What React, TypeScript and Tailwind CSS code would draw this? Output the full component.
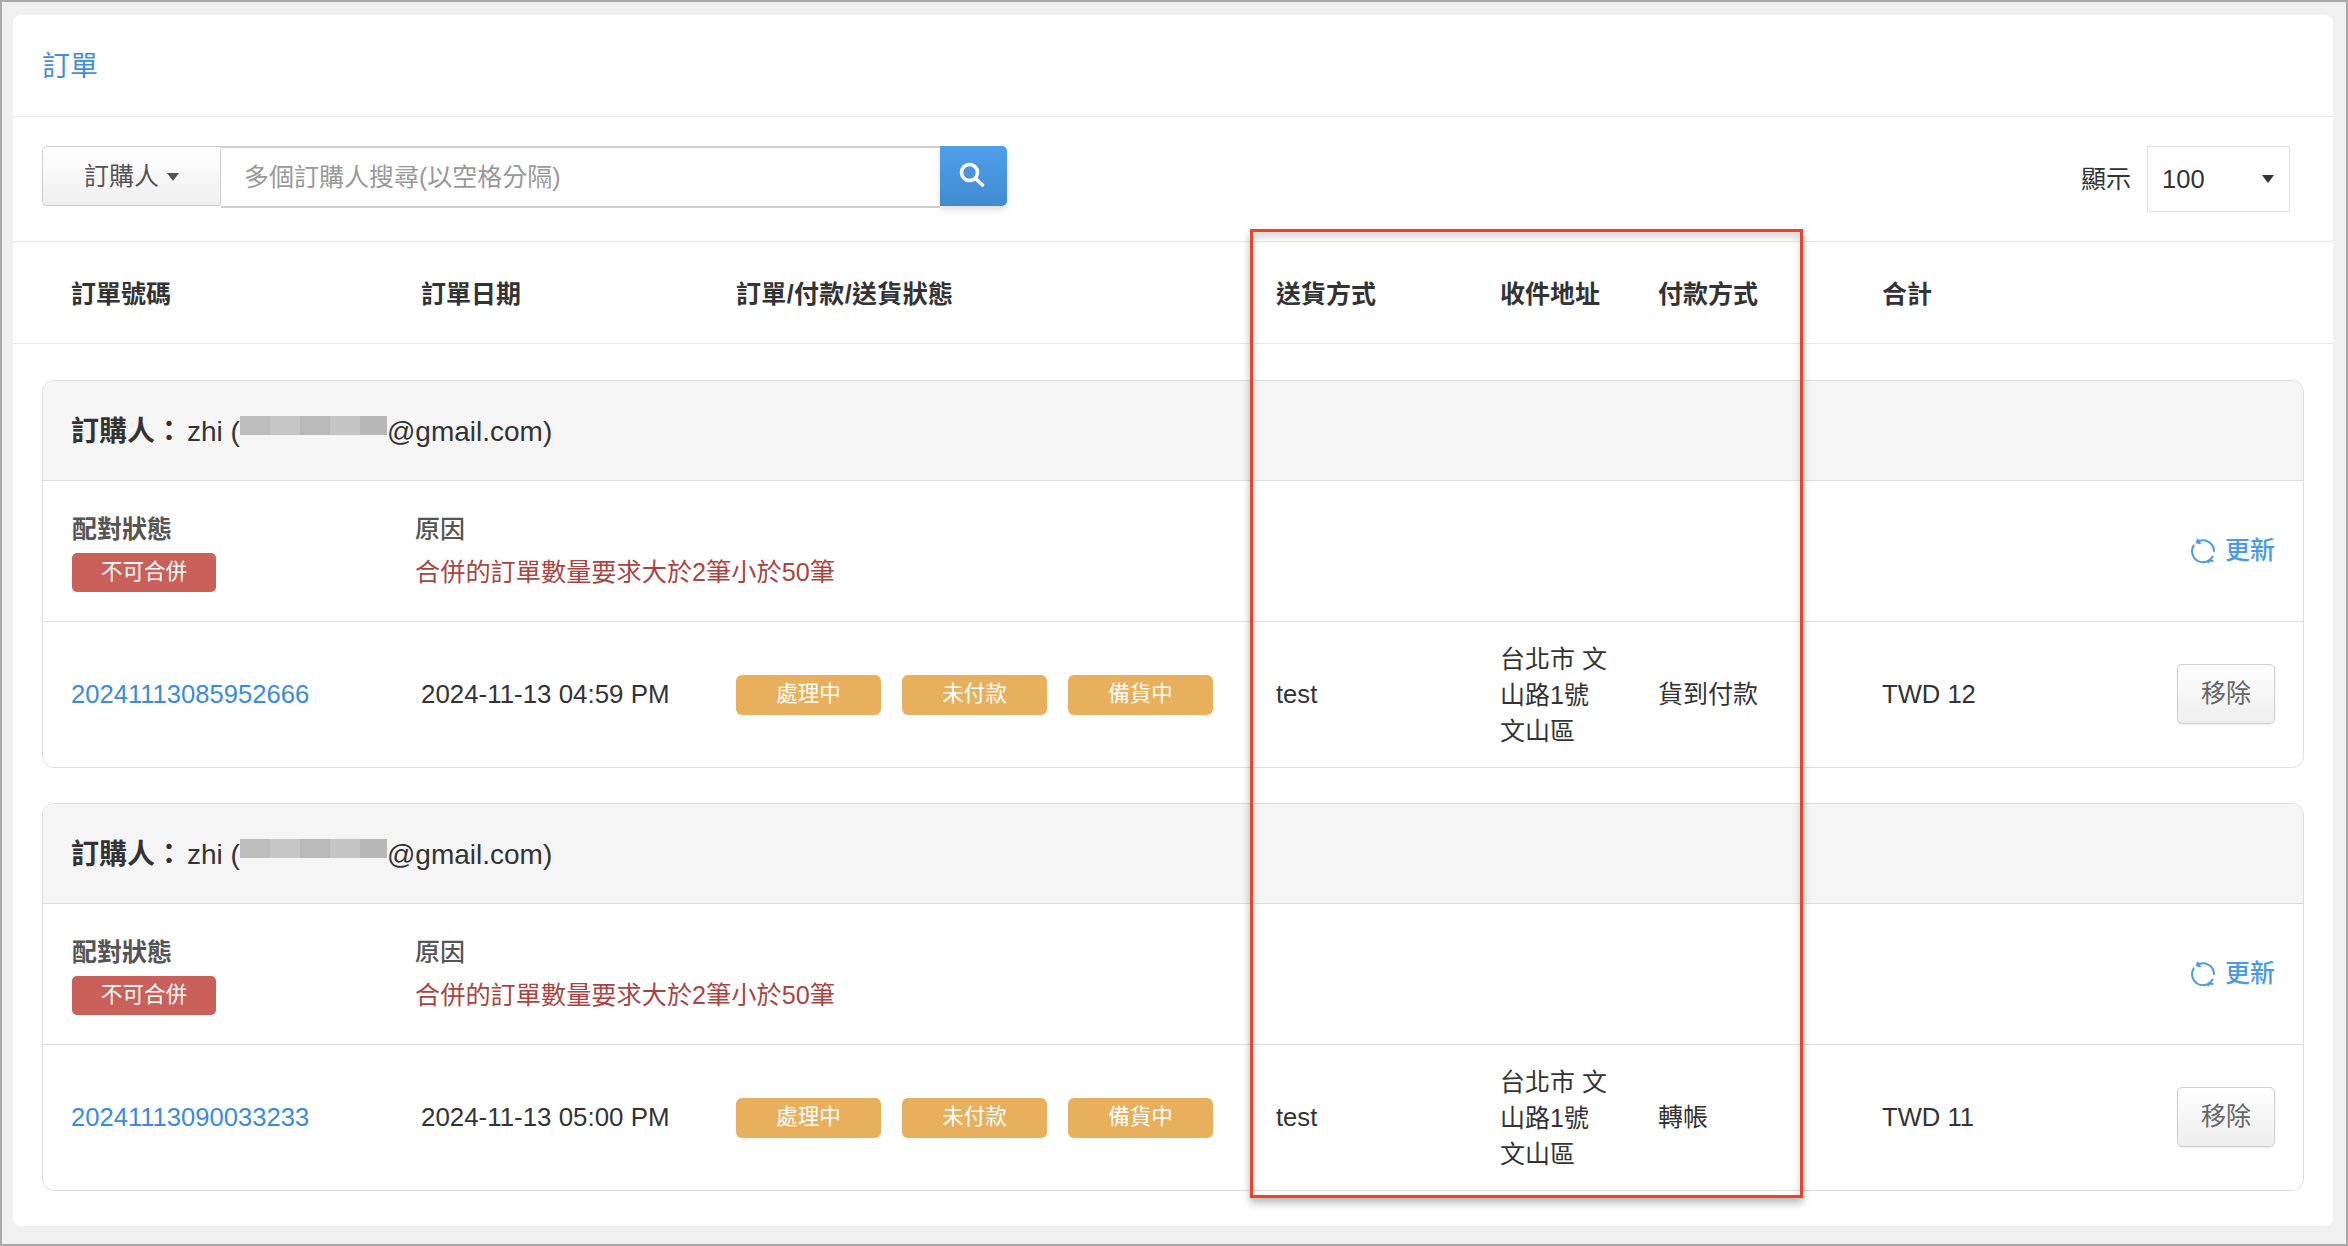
import React from "react";

const cols = "grid grid-cols-[350px_315px_540px_224px_158px_224px_1fr]";

function Caret({ className }: { className: string }) {
  return <span className={"inline-block h-0 w-0 border-x-[6px] border-t-[8px] border-x-transparent " + className} />;
}

function SearchIcon() {
  return (
    <svg width="26" height="26" viewBox="0 0 26 26" fill="none" stroke="white" strokeWidth="3.6" strokeLinecap="round" className="-translate-x-[2px] -translate-y-[1px]">
      <circle cx="10.5" cy="10.5" r="8" />
      <path d="M16.5 16.5L23.5 23" />
    </svg>
  );
}

function RefreshIcon() {
  return (
    <svg width="26" height="26" viewBox="0 0 26 26" fill="none" stroke="#4a9ae6" strokeWidth="2" strokeLinecap="round" strokeLinejoin="round">
      <path d="M7 4.2A11 11 0 0 1 24 13" />
      <path d="M22.6 18.6A11 11 0 0 1 2 13A11 11 0 0 1 3.6 7.4" />
      <path d="M7.8 1.4L7 4.4L10 5.2" />
      <path d="M18.2 24.4L19.2 22L22.6 23" />
    </svg>
  );
}

function Status({ children }: { children: React.ReactNode }) {
  return (
    <span className="flex h-10 w-[145px] items-center justify-center rounded-[6px] bg-[#e8b05c] text-[21.5px] text-white">
      {children}
    </span>
  );
}

function Redaction() {
  return (
    <span className="inline-flex h-[19px] w-[147px] -translate-y-[6px] align-middle">
      <span className="w-[30px] bg-[#bdbdbd]" />
      <span className="w-[30px] bg-[#c6c6c6]" />
      <span className="w-[30px] bg-[#b9b9b9]" />
      <span className="w-[30px] bg-[#c5c5c5]" />
      <span className="w-[27px] bg-[#b8b8b8]" />
    </span>
  );
}

function OrderPanel({ order, date, pay, total }: { order: string; date: string; pay: string; total: string }) {
  return (
    <section className="overflow-hidden rounded-[12px] border border-[#dedede]">
      <div className="flex h-[100px] items-center border-b border-[#dedede] bg-[#f5f5f5] pl-[28px] pt-[2px] text-[28px]">
        <b className="mr-[4px]">訂購人：</b>
        <span className="whitespace-pre">zhi (</span>
        <Redaction />
        <span>@gmail.com)</span>
      </div>
      <div className="flex h-[141px] items-center border-b border-[#dedede] pl-[29px] pr-[28px]">
        <div className="w-[343px]">
          <div className="font-bold leading-[36px] text-[#555]">配對狀態</div>
          <div className="mt-[6px] flex h-[39px] w-[144px] items-center justify-center rounded-[5px] bg-[#c9605a] text-[21.5px] text-white">
            不可合併
          </div>
        </div>
        <div className="flex-1">
          <div className="font-medium leading-[36px] text-[#555]">原因</div>
          <div className="mt-[6px] leading-[39px] text-[25.2px] text-[#a94442]">合併的訂單數量要求大於2筆小於50筆</div>
        </div>
        <a className="flex items-center gap-[9px] font-medium text-[#4a9ae6]">
          <RefreshIcon />
          更新
        </a>
      </div>
      <div className={cols + " h-[145px] items-center pl-[28px] pr-[28px]"}>
        <a className="text-[25.6px] text-[#3a8bdc]">{order}</a>
        <div className="text-[25.9px]">{date}</div>
        <div className="flex gap-[21px]">
          <Status>處理中</Status>
          <Status>未付款</Status>
          <Status>備貨中</Status>
        </div>
        <div className="text-[25.6px]">test</div>
        <div className="w-[112px] leading-[36px]">台北市 文山路1號 文山區</div>
        <div>{pay}</div>
        <div className="flex items-center justify-between">
          <span className="text-[25.6px]">{total}</span>
          <button className="mb-[2px] h-[60px] w-[98px] rounded-[5px] border border-[#cfcfcf] bg-gradient-to-b from-white to-[#eeeeee] text-[#666] shadow-[0_1px_2px_rgba(0,0,0,0.08)]">
            移除
          </button>
        </div>
      </div>
    </section>
  );
}

export default function App() {
  return (
    <div className="relative h-[1246px] w-[2348px] overflow-hidden border-x-2 border-y-2 border-x-[#a9a9a9] border-y-[#a9a9a9] bg-[#f0f0f0] pl-[11px] pr-[13px] pt-[13px] font-['Liberation_Sans','Noto_Sans_CJK_TC',sans-serif] text-[25px] text-[#333]">
      <main className="h-[1211px] rounded-[8px] bg-white">
        <div className="flex h-[102px] items-center border-b border-[#e8e8e8] pl-[29px] pt-[2px] text-[28px] text-[#3f8fdd]">訂單</div>
        <div className="flex h-[125px] items-start justify-between border-b border-[#e8e8e8] pl-[29px] pr-[43px] pt-[29px]">
          <div className="flex">
            <button className="flex h-[60px] w-[179px] items-center gap-[8px] rounded-l-[5px] border border-[#d0d0d0] bg-gradient-to-b from-white to-[#efefef] pl-[41px] pt-[2px] text-[#555]">
              訂購人
              <Caret className="border-t-[#555]" />
            </button>
            <input
              readOnly
              placeholder="多個訂購人搜尋(以空格分隔)"
              className="h-[62px] w-[719px] border-y-2 border-[#cfcfcf] bg-white pl-[23px] text-[25px] outline-none placeholder:text-[#999]"
            />
            <button className="flex h-[60px] w-[67px] items-center justify-center rounded-r-[5px] bg-gradient-to-b from-[#4f9fe9] to-[#418bd0] shadow-[0_4px_6px_rgba(0,0,0,0.12)]">
              <SearchIcon />
            </button>
          </div>
          <div className="flex items-start">
            <span className="mr-[16px] leading-[66px]">顯示</span>
            <div className="flex h-[66px] w-[143px] items-center justify-between border border-[#e0e0e0] pl-[14px] pr-[15px] text-[25.6px]">
              100
              <Caret className="border-t-[#333]" />
            </div>
          </div>
        </div>
        <div className={cols + " h-[102px] items-center border-b border-[#e8e8e8] pl-[58px] pt-[4px] font-bold"}>
          <div>訂單號碼</div>
          <div>訂單日期</div>
          <div className="tracking-[0.35px]">訂單/付款/送貨狀態</div>
          <div>送貨方式</div>
          <div>收件地址</div>
          <div>付款方式</div>
          <div>合計</div>
        </div>
        <div className="flex flex-col gap-[35px] pl-[29px] pr-[29px] pt-[36px]">
          <OrderPanel order="20241113085952666" date="2024-11-13 04:59 PM" pay="貨到付款" total="TWD 12" />
          <OrderPanel order="20241113090033233" date="2024-11-13 05:00 PM" pay="轉帳" total="TWD 11" />
        </div>
      </main>
      <div className="absolute left-[1248px] top-[227px] h-[969px] w-[553px] border-[3px] border-[#e8432b] shadow-[0_5px_8px_rgba(0,0,0,0.28),inset_0_5px_8px_rgba(0,0,0,0.16)]" />
    </div>
  );
}
